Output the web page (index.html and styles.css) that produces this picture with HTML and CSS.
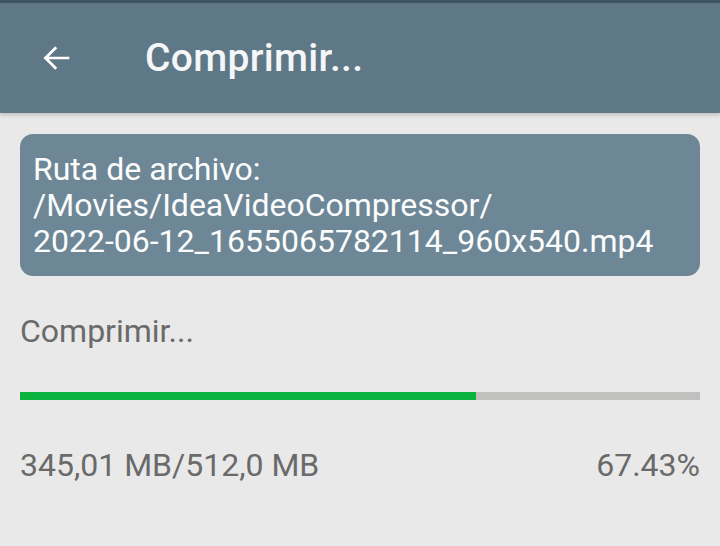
FILE: index.html
```html
<!DOCTYPE html>
<html lang="es">
<head>
<meta charset="utf-8">
<link rel="stylesheet" href="styles.css">
</head>
<body>
<header class="appbar">
  <button class="back" aria-label="Atrás">
    <svg width="36" height="36" viewBox="0 0 24 24"><path d="M20 12H5M11.5 5.5L5 12l6.5 6.5" fill="none" stroke="#fff" stroke-width="1.8" stroke-linecap="square"/></svg>
  </button>
  <h1 class="title">Comprimir...</h1>
</header>
<main class="content">
  <div class="path-card">Ruta de archivo:<br>/Movies/IdeaVideoCompressor/<br>2022-06-12_1655065782114_960x540.mp4</div>
  <div class="status">Comprimir...</div>
  <div class="progress"><div class="progress-fill" style="width:67.06%"></div></div>
  <div class="stats"><span>345,01 MB/512,0 MB</span><span>67.43%</span></div>
</main>
</body>
</html>
```
FILE: styles.css
```css
html, body { margin: 0; padding: 0; }
body {
  width: 720px;
  height: 546px;
  overflow: hidden;
  background: #e8e9e8;
  font-family: Roboto, "Noto Sans", sans-serif;
}
.appbar {
  height: 110px;
  border-top: 3px solid #3f5566;
  background: #5e7887;
  display: flex;
  align-items: center;
  box-shadow: 0 2px 4px rgba(0,0,0,0.18);
}
.back {
  background: none;
  border: 0;
  padding: 0;
  margin-left: 38px;
  width: 36px;
  height: 36px;
  display: flex;
}
.title {
  margin: 0 0 0 71px;
  color: #f4f6f7;
  font-size: 39px;
  font-weight: 500;
  letter-spacing: 0.3px;
  line-height: 46px;
}
.content {
  padding: 21px 20px 0;
}
.path-card {
  background: #6e8797;
  border-radius: 13px;
  color: #fbfcfc;
  font-size: 32px;
  line-height: 36px;
  padding: 17px 13px 17px 13px;
}
.status {
  margin-top: 35px;
  color: #6a6a6a;
  font-size: 32px;
  line-height: 40px;
}
.progress {
  margin-top: 41px;
  height: 8px;
  background: #c0c0bf;
}
.progress-fill {
  height: 100%;
  background: #0bb23e;
}
.stats {
  margin-top: 45px;
  display: flex;
  justify-content: space-between;
  color: #6a6a6a;
  font-size: 32px;
  line-height: 40px;
}
```
